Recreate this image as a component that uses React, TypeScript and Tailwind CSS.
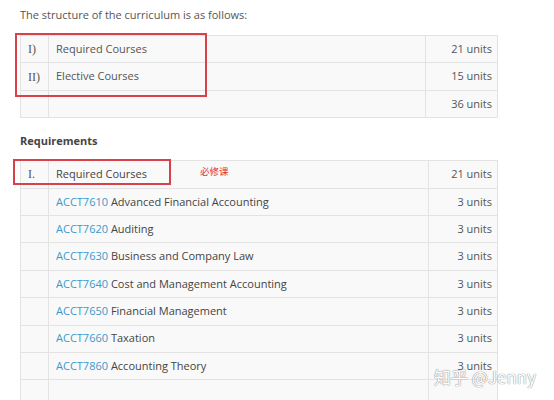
import React from 'react';

interface Course {
    code: string;
    name: string;
    units: string;
}

const structure = [
    { num: 'I)', label: 'Required Courses', units: '21 units' },
    { num: 'II)', label: 'Elective Courses', units: '15 units' },
    { num: '', label: '', units: '36 units' },
];

const courses: Course[] = [
    { code: 'ACCT7610', name: 'Advanced Financial Accounting', units: '3 units' },
    { code: 'ACCT7620', name: 'Auditing', units: '3 units' },
    { code: 'ACCT7630', name: 'Business and Company Law', units: '3 units' },
    { code: 'ACCT7640', name: 'Cost and Management Accounting', units: '3 units' },
    { code: 'ACCT7650', name: 'Financial Management', units: '3 units' },
    { code: 'ACCT7660', name: 'Taxation', units: '3 units' },
    { code: 'ACCT7860', name: 'Accounting Theory', units: '3 units' },
];

const cell = 'border border-[#e3e3e3] h-[27.4px] p-0 align-middle';
const numCell = `${cell} w-[28px] pl-[7px] font-['Liberation_Serif',serif] text-[12px]`;

export default function App() {
    return (
        <div className="relative w-[554px] h-[400px] overflow-hidden bg-white font-['Open_Sans',sans-serif] text-[11px] text-[#555]">
            <div className="ml-[20px] w-[478px] pt-[6px]">
                <p className="leading-[18px]">The structure of the curriculum is as follows:</p>

                {/* Structure table */}
                <div className="relative mt-[11px]">
                    <table className="w-full border-collapse bg-[#f9f9f9]">
                        <tbody>
                            {structure.map((row, i) => (
                                <tr key={i}>
                                    <td className={numCell}>{row.num}</td>
                                    <td className={`${cell} pl-[7px]`}>{row.label}</td>
                                    <td className={`${cell} w-[72px] pr-[5px] text-right`}>{row.units}</td>
                                </tr>
                            ))}
                        </tbody>
                    </table>
                    <div className="absolute left-[-5px] top-[-2px] w-[192px] h-[64px] border-2 border-[#d9414a]" />
                </div>

                <h3 className="mt-[14px] font-bold text-[#444] leading-[18px]">Requirements</h3>

                {/* Requirements table */}
                <div className="relative mt-[10px]">
                    <table className="w-full border-collapse bg-[#f9f9f9]">
                        <tbody>
                            <tr>
                                <td className={numCell}>I.</td>
                                <td className={`${cell} pl-[7px] text-[#444]`}>Required Courses</td>
                                <td className={`${cell} w-[69px] pr-[5px] text-right`}>21 units</td>
                            </tr>
                            {courses.map((c) => (
                                <tr key={c.code}>
                                    <td className={numCell}></td>
                                    <td className={`${cell} pl-[7px] text-[#444]`}>
                                        <span className="text-[#3a9ac9]">{c.code}</span> {c.name}
                                    </td>
                                    <td className={`${cell} w-[69px] pr-[5px] text-right`}>{c.units}</td>
                                </tr>
                            ))}
                            <tr>
                                <td className={numCell}></td>
                                <td className={cell}></td>
                                <td className={cell}></td>
                            </tr>
                        </tbody>
                    </table>
                    <div className="absolute left-[-7px] top-[-1px] w-[158px] h-[26px] border-2 border-[#d9414a]" />
                    <span className="absolute left-[180px] top-[4px] text-[9.5px] text-[#e0303a] font-['Noto_Sans_CJK_SC',sans-serif]">必修课</span>
                </div>
            </div>

            {/* watermark */}
            <div className="absolute left-[434px] top-[364px] text-[17px] text-white font-['Noto_Sans_CJK_SC',sans-serif] [text-shadow:0_0_1px_#888,0_0_1px_#888]">
                知乎 @Jenny
            </div>
        </div>
    );
}
